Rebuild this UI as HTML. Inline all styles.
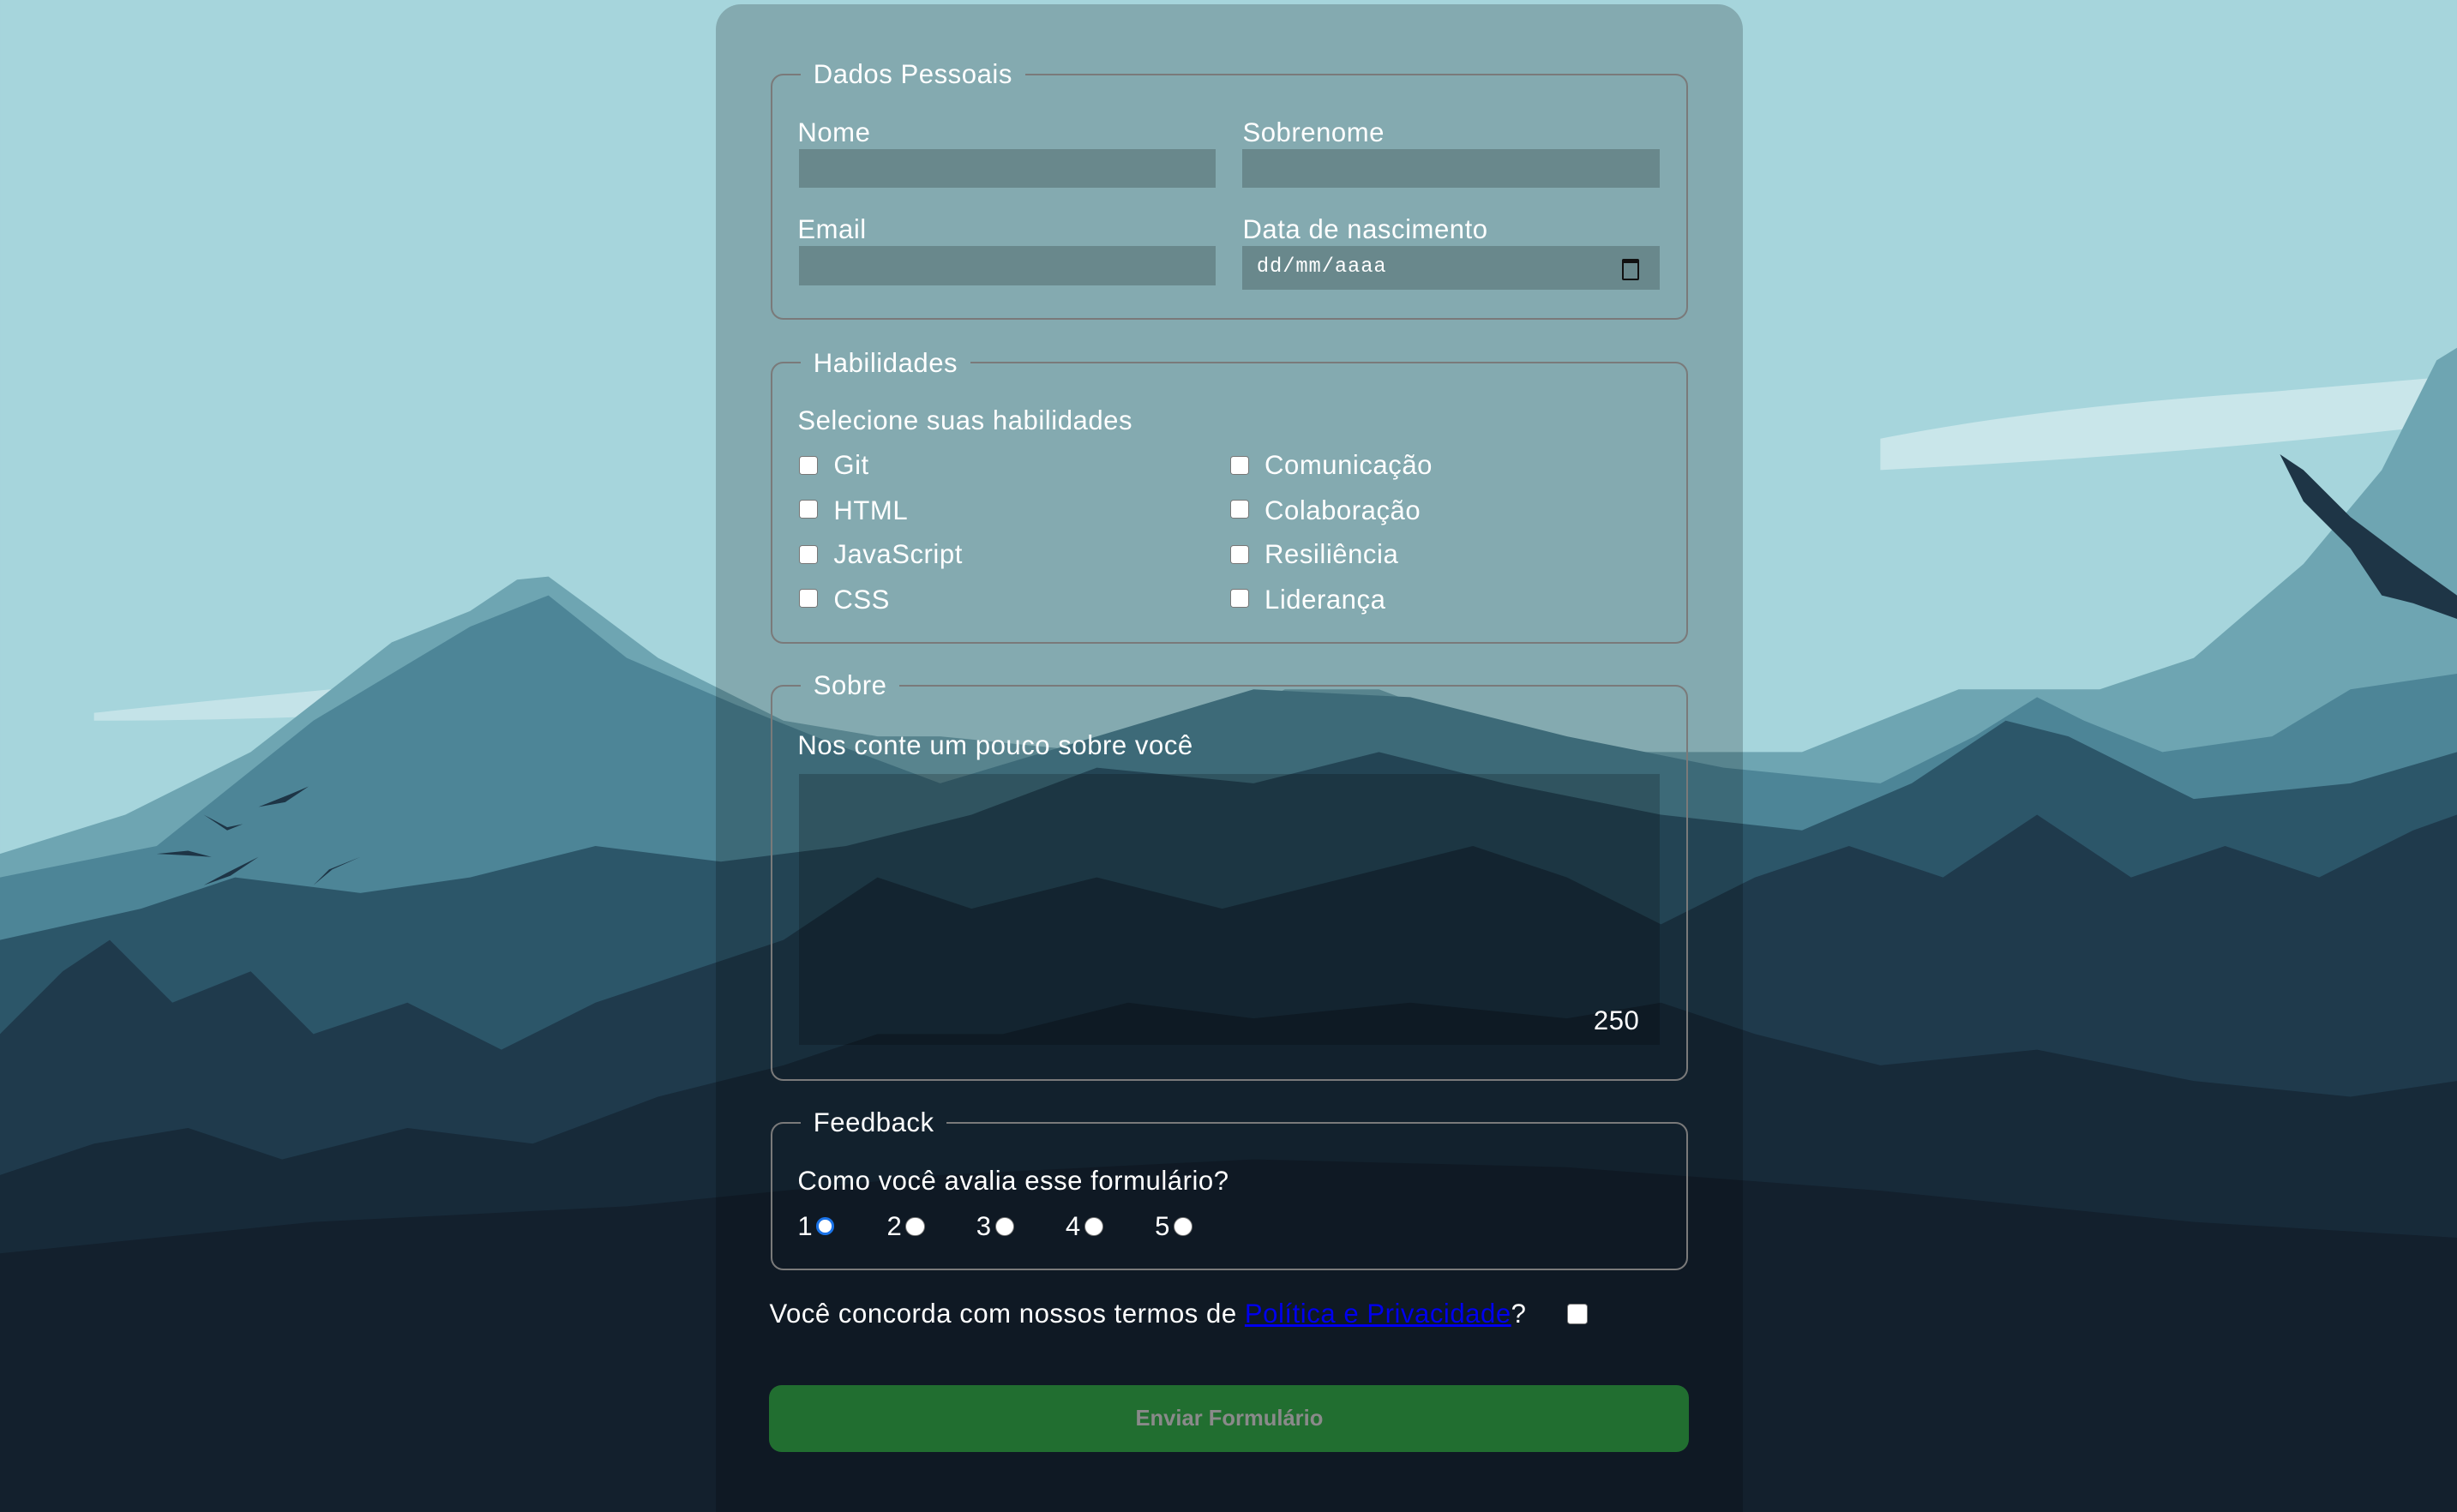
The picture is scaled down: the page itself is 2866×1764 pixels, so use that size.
<!DOCTYPE html>
<html><head><meta charset="utf-8"><style>
html,body{margin:0;padding:0;width:2866px;height:1764px;overflow:hidden;background:#13202d}
#w{zoom:1.82781;width:1568px;height:965px;position:relative;font-family:"Liberation Sans",sans-serif;color:#fff}
svg.bg{position:absolute;left:0;top:0}
.panel{position:absolute;left:457px;top:3px;width:655px;height:980px;background:rgba(0,0,0,0.2);border-radius:16px}
fieldset{position:absolute;left:492px;width:585px;margin:0;padding:0;box-sizing:border-box;border:1.5px solid #7a7a7a;border-radius:8px}
legend{margin-left:18px;padding:0 8px;font-size:17px;line-height:17px;letter-spacing:0.3px}
.t{position:absolute;font-size:17px;white-space:nowrap;letter-spacing:0.3px}
.in{position:absolute;background:rgba(0,0,0,0.2)}
.cb{position:absolute;width:11px;height:11px;background:#fff;border:1px solid #777;border-radius:2px}
.rd{position:absolute;width:11px;height:11px;background:#fff;border:1px solid #777;border-radius:50%}
</style></head><body><div id="w">
<svg class="bg" width="1568" height="965" viewBox="0 0 1568 965">
<rect width="1568" height="965" fill="#a6d5dc"/>
<path d="M1200 280 Q1300 260 1450 250 L1568 240 L1568 270 Q1400 290 1200 300Z" fill="#c9e6ea"/>
<path d="M60 455 Q200 440 330 430 L330 450 Q200 460 60 460Z" fill="#c4e3e8"/>
<path d="M0 545 L80 520 L160 480 L250 410 L300 390 L330 370 L350 368 L380 390 L420 420 L460 440 L500 460 L560 470 L600 470 L700 480 L760 470 L820 440 L880 440 L960 470 L1050 480 L1150 480 L1250 440 L1340 440 L1400 420 L1470 360 L1520 300 L1555 230 L1568 222 L1568 965 L0 965Z" fill="#6ea5b2"/>
<path d="M0 560 L100 540 L200 460 L300 400 L350 380 L400 420 L470 450 L520 470 L600 500 L700 470 L800 440 L900 445 L1000 470 L1100 490 L1200 500 L1260 470 L1300 445 L1330 460 L1380 480 L1450 470 L1500 440 L1568 430 L1568 965 L0 965Z" fill="#4d8597"/>
<path d="M0 600 L90 580 L150 560 L230 570 L300 560 L380 540 L460 550 L540 540 L620 520 L700 490 L800 500 L880 480 L960 500 L1060 520 L1150 530 L1220 500 L1280 460 L1320 470 L1400 510 L1500 500 L1568 480 L1568 965 L0 965Z" fill="#2c5669"/>
<path d="M0 660 L40 620 L70 600 L110 640 L160 620 L200 660 L260 640 L320 670 L380 640 L440 620 L500 600 L560 560 L620 580 L700 560 L780 580 L860 560 L940 540 L1000 560 L1060 590 L1120 560 L1180 540 L1240 560 L1300 520 L1360 560 L1420 540 L1480 560 L1540 530 L1568 520 L1568 965 L0 965Z" fill="#1f3a4c"/>
<path d="M0 750 L60 730 L120 720 L180 740 L260 720 L340 730 L420 700 L500 680 L560 660 L640 660 L720 640 L800 650 L900 640 L1000 650 L1060 640 L1120 660 L1200 680 L1300 670 L1400 690 L1500 700 L1568 690 L1568 965 L0 965Z" fill="#172a39"/>
<path d="M0 800 L200 780 L400 770 L600 750 L800 740 L1000 745 L1200 760 L1400 780 L1568 790 L1568 965 L0 965Z" fill="#13202d"/>
<g fill="#1e3546">
<path d="M1455 290 L1470 300 L1500 330 L1540 360 L1568 380 L1568 395 L1540 385 L1520 380 L1500 350 L1470 320Z"/>
<path d="M100 545 l20 -2 l15 4 l-15 -1z M130 520 l15 8 l10 -2 l-10 4z M165 515 l20 -8 l12 -5 l-15 10z M130 565 l15 -8 l20 -10 l-18 12z M200 565 l10 -10 l20 -8 l-18 8z"/>
</g>
</svg>
<div class="panel"></div>

<fieldset style="top:39px;height:165px"><legend>Dados Pessoais</legend></fieldset>
<div class="t" style="left:509px;top:75px">Nome</div>
<div class="t" style="left:793px;top:75px">Sobrenome</div>
<div class="in" style="left:510px;top:95px;width:266px;height:25px"></div>
<div class="in" style="left:793px;top:95px;width:266px;height:25px"></div>
<div class="t" style="left:509px;top:137px">Email</div>
<div class="t" style="left:793px;top:137px">Data de nascimento</div>
<div class="in" style="left:510px;top:157px;width:266px;height:25px"></div>
<div class="in" style="left:793px;top:157px;width:266px;height:28px"></div>
<div class="t" style="left:802px;top:163px;font-family:'Liberation Mono',monospace;font-size:13px;letter-spacing:0.5px">dd/mm/aaaa</div>
<div style="position:absolute;left:1035px;top:165px;width:9px;height:10px;border:1.5px solid #111;border-top-width:3px;border-radius:1px"></div>

<fieldset style="top:223px;height:188px"><legend>Habilidades</legend></fieldset>
<div class="t" style="left:509px;top:259px">Selecione suas habilidades</div>
<div class="cb" style="left:510px;top:291px"></div><div class="t" style="left:532px;top:287px">Git</div>
<div class="cb" style="left:510px;top:319px"></div><div class="t" style="left:532px;top:316px">HTML</div>
<div class="cb" style="left:510px;top:348px"></div><div class="t" style="left:532px;top:344px">JavaScript</div>
<div class="cb" style="left:510px;top:376px"></div><div class="t" style="left:532px;top:373px">CSS</div>
<div class="cb" style="left:785px;top:291px"></div><div class="t" style="left:807px;top:287px">Comunicação</div>
<div class="cb" style="left:785px;top:319px"></div><div class="t" style="left:807px;top:316px">Colaboração</div>
<div class="cb" style="left:785px;top:348px"></div><div class="t" style="left:807px;top:344px">Resiliência</div>
<div class="cb" style="left:785px;top:376px"></div><div class="t" style="left:807px;top:373px">Liderança</div>

<fieldset style="top:429px;height:261px"><legend>Sobre</legend></fieldset>
<div class="t" style="left:509px;top:466px">Nos conte um pouco sobre você</div>
<div class="in" style="left:510px;top:494px;width:549px;height:173px"></div>
<div class="t" style="left:1017px;top:642px">250</div>

<fieldset style="top:708px;height:103px"><legend>Feedback</legend></fieldset>
<div class="t" style="left:509px;top:744px">Como você avalia esse formulário?</div>
<div class="t" style="left:509px;top:773px">1</div><div class="rd" style="left:521px;top:777px;border:2px solid #1a73e8;width:8px;height:8px"></div>
<div class="t" style="left:566px;top:773px">2</div><div class="rd" style="left:578px;top:777px"></div>
<div class="t" style="left:623px;top:773px">3</div><div class="rd" style="left:635px;top:777px"></div>
<div class="t" style="left:680px;top:773px">4</div><div class="rd" style="left:692px;top:777px"></div>
<div class="t" style="left:737px;top:773px">5</div><div class="rd" style="left:749px;top:777px"></div>

<div class="t" style="left:491px;top:829px">Você concorda com nossos termos de <span style="color:#0000ee;text-decoration:underline">Política e Privacidade</span>?</div>
<div class="cb" style="left:1000px;top:832px;width:12px;height:12px"></div>

<div style="position:absolute;left:491px;top:884px;width:587px;height:43px;background:#216e30;border-radius:8px;color:#8a8a8a;font-weight:bold;font-size:14px;text-align:center;line-height:43px">Enviar Formulário</div>
</div></body></html>
